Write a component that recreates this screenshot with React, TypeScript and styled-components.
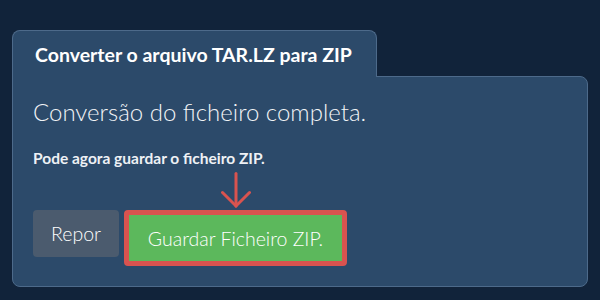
import React from 'react'
import styled, { createGlobalStyle } from 'styled-components'

const GlobalStyle = createGlobalStyle`
  html, body {
    margin: 0;
    padding: 0;
    background: #11233a;
    font-family: Lato, "Liberation Sans", sans-serif;
  }
`

const Page = styled.div`
  width: 600px;
  height: 300px;
  box-sizing: border-box;
  padding: 30px 12px 0 12px;
`

const Tab = styled.div`
  display: inline-block;
  position: relative;
  z-index: 1;
  margin-bottom: -1px;
  padding: 13px 24px 11px 22px;
  background: #2c4a6a;
  border: 1px solid #4d6a8a;
  border-bottom: none;
  border-radius: 8px 8px 0 0;
  color: #fff;
  font-size: 19.5px;
  font-weight: 700;
  line-height: 22px;
`

const Panel = styled.div`
  box-sizing: border-box;
  height: 211px;
  padding: 20px 20px 0 20px;
  background: #2c4a6a;
  border: 1px solid #4d6a8a;
  border-radius: 0 8px 8px 8px;
  color: #fff;
`

const Heading = styled.div`
  font-size: 24px;
  font-weight: 300;
  line-height: 30px;
  color: #f2f4f7;
`

const Note = styled.div`
  margin-top: 22px;
  font-size: 15.5px;
  font-weight: 700;
  line-height: 18px;
  color: #eef1f5;
`

const Actions = styled.div`
  display: flex;
  align-items: flex-start;
  gap: 5px;
  margin-top: 43px;
`

const Button = styled.button<{ $variant: 'reset' | 'save' }>`
  box-sizing: border-box;
  position: relative;
  padding: 0;
  font-family: Lato, "Liberation Sans", sans-serif;
  font-size: 19.5px;
  font-weight: 300;
  color: #fff;
  cursor: pointer;
  border-radius: 4px;
  ${({ $variant }) =>
    $variant === 'reset'
      ? `
    width: 86px;
    height: 47px;
    background: #4b5b6e;
    border: none;
  `
      : `
    width: 223px;
    height: 56px;
    background: #5cb85c;
    border: 5px solid #d9534f;
  `}
`

const Arrow = styled.svg`
  position: absolute;
  left: 50%;
  top: -43px;
  margin-left: -15px;
  width: 30px;
  height: 37px;
`

export default function App() {
  return (
    <Page>
      <GlobalStyle />
      <Tab>Converter o arquivo TAR.LZ para ZIP</Tab>
      <Panel>
        <Heading>Conversão do ficheiro completa.</Heading>
        <Note>Pode agora guardar o ficheiro ZIP.</Note>
        <Actions>
          <Button $variant="reset">Repor</Button>
          <Button $variant="save">
            <Arrow viewBox="0 0 30 37" fill="none" stroke="#d9534f" strokeWidth="3" strokeLinecap="round">
              <path d="M15 1.5 V34" />
              <path d="M1.5 20.5 L15 34 L28.5 20.5" />
            </Arrow>
            Guardar Ficheiro ZIP.
          </Button>
        </Actions>
      </Panel>
    </Page>
  )
}
